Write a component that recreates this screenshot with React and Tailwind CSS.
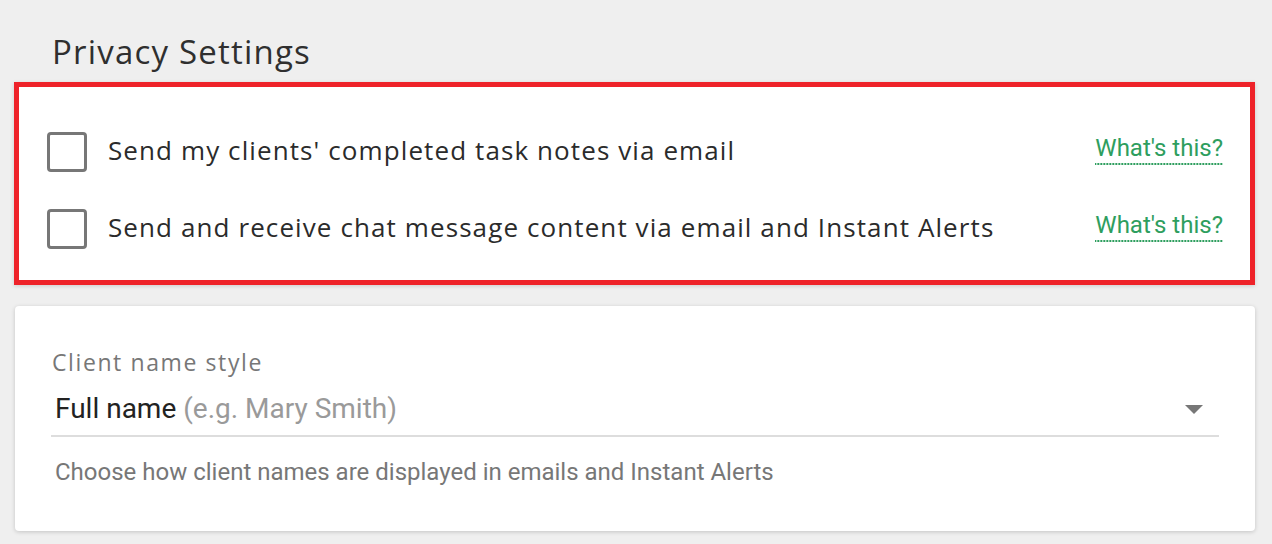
const settings = [
  { id: "notes", label: "Send my clients' completed task notes via email" },
  { id: "chat", label: "Send and receive chat message content via email and Instant Alerts" },
];

const heading = { fontFamily: '"Open Sans", "DejaVu Sans", sans-serif' };
const roboto = { fontFamily: 'Roboto, "Liberation Sans", sans-serif' };

function SettingRow({ label }) {
  return (
    <div className="flex h-[40px] items-center">
      <span className="h-[40px] w-[40px] shrink-0 rounded-[4px] border-[3px] border-[#777777] bg-white" />
      <span
        className="ml-[21px] -mt-[5px] text-[26px] font-medium leading-none tracking-[1.1px] text-[#2b2b2b]"
        style={heading}
      >
        {label}
      </span>
      <a
        href="#"
        className="ml-auto -mt-[4px] bg-[linear-gradient(to_right,#2e9e5e_60%,transparent_60%)] bg-[length:3px_2px] bg-bottom bg-repeat-x pb-[5px] text-[24px] leading-none text-[#2e9e5e]"
        style={roboto}
      >
        What's this?
      </a>
    </div>
  );
}

export default function App() {
  return (
    <div className="min-h-[544px] bg-[#efefef] pl-[14px] pr-[17px] pt-[32px]">
      <h1
        className="ml-[38px] text-[33px] font-medium leading-[40px] tracking-[1.2px] text-[#2f2f2f]"
        style={heading}
      >
        Privacy Settings
      </h1>

      <section className="mt-[10px] flex flex-col gap-[37px] border-[5px] border-[#ee2229] bg-white pb-[31px] pl-[28px] pr-[27px] pt-[45px] shadow-[0_1px_4px_rgba(0,0,0,0.15)]">
        {settings.map((s) => (
          <SettingRow key={s.id} label={s.label} />
        ))}
      </section>

      <section className="ml-[1px] mt-[21px] h-[225px] rounded-[4px] bg-white px-[36px] pt-[45px] shadow-[0_1px_4px_rgba(0,0,0,0.18)]">
        <div
          className="ml-[1px] text-[23px] font-medium leading-none tracking-[1.6px] text-[#777777]"
          style={heading}
        >
          Client name style
        </div>
        <div
          className="mt-[12px] flex h-[51px] items-center border-b-2 border-[#dddddd] pb-[3px] pl-[4px] pr-[16px]"
          style={roboto}
        >
          <span className="text-[28px] leading-none text-[#222222]">
            Full name <span className="text-[#9a9a9a]">(e.g. Mary Smith)</span>
          </span>
          <svg className="ml-auto" width="18" height="9" viewBox="0 0 18 9">
            <path d="M0 0h18L9 9z" fill="#777777" />
          </svg>
        </div>
        <p className="mt-[23px] pl-[4px] text-[24px] leading-none text-[#777777]" style={roboto}>
          Choose how client names are displayed in emails and Instant Alerts
        </p>
      </section>
    </div>
  );
}
